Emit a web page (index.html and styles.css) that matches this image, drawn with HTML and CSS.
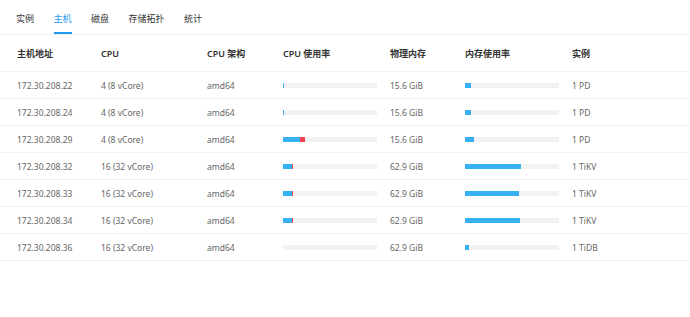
FILE: index.html
```html
<!DOCTYPE html>
<html lang="zh-CN">
<head>
    <meta charset="UTF-8">
    <meta name="viewport" content="width=device-width, initial-scale=1.0">
    <title>主机</title>
    <link rel="stylesheet" href="styles.css">
</head>
<body>
    <div class="tabs">
        <span class="tab">实例</span>
        <span class="tab active">主机</span>
        <span class="tab">磁盘</span>
        <span class="tab">存储拓扑</span>
        <span class="tab">统计</span>
    </div>

    <table class="hosts">
        <colgroup>
            <col style="width: 101px">
            <col style="width: 106px">
            <col style="width: 76px">
            <col style="width: 107px">
            <col style="width: 75px">
            <col style="width: 107px">
            <col>
        </colgroup>
        <thead>
            <tr>
                <th>主机地址</th>
                <th>CPU</th>
                <th>CPU 架构</th>
                <th>CPU 使用率</th>
                <th>物理内存</th>
                <th>内存使用率</th>
                <th>实例</th>
            </tr>
        </thead>
        <tbody>
            <tr>
                <td>172.30.208.22</td><td>4 (8 vCore)</td><td>amd64</td>
                <td><div class="bar"><i class="used" style="width: 1px"></i></div></td>
                <td>15.6 GiB</td>
                <td><div class="bar"><i class="used" style="width: 6px"></i></div></td>
                <td>1 PD</td>
            </tr>
            <tr>
                <td>172.30.208.24</td><td>4 (8 vCore)</td><td>amd64</td>
                <td><div class="bar"><i class="used" style="width: 1px"></i></div></td>
                <td>15.6 GiB</td>
                <td><div class="bar"><i class="used" style="width: 6px"></i></div></td>
                <td>1 PD</td>
            </tr>
            <tr>
                <td>172.30.208.29</td><td>4 (8 vCore)</td><td>amd64</td>
                <td><div class="bar"><i class="used" style="width: 17px"></i><i class="sys" style="width: 5px"></i></div></td>
                <td>15.6 GiB</td>
                <td><div class="bar"><i class="used" style="width: 9px"></i></div></td>
                <td>1 PD</td>
            </tr>
            <tr>
                <td>172.30.208.32</td><td>16 (32 vCore)</td><td>amd64</td>
                <td><div class="bar"><i class="used" style="width: 9px"></i><i class="sys" style="width: 1px"></i></div></td>
                <td>62.9 GiB</td>
                <td><div class="bar"><i class="used" style="width: 56px"></i></div></td>
                <td>1 TiKV</td>
            </tr>
            <tr>
                <td>172.30.208.33</td><td>16 (32 vCore)</td><td>amd64</td>
                <td><div class="bar"><i class="used" style="width: 9px"></i><i class="sys" style="width: 1px"></i></div></td>
                <td>62.9 GiB</td>
                <td><div class="bar"><i class="used" style="width: 54px"></i></div></td>
                <td>1 TiKV</td>
            </tr>
            <tr>
                <td>172.30.208.34</td><td>16 (32 vCore)</td><td>amd64</td>
                <td><div class="bar"><i class="used" style="width: 9px"></i><i class="sys" style="width: 1px"></i></div></td>
                <td>62.9 GiB</td>
                <td><div class="bar"><i class="used" style="width: 55px"></i></div></td>
                <td>1 TiKV</td>
            </tr>
            <tr>
                <td>172.30.208.36</td><td>16 (32 vCore)</td><td>amd64</td>
                <td><div class="bar"></div></td>
                <td>62.9 GiB</td>
                <td><div class="bar"><i class="used" style="width: 4px"></i></div></td>
                <td>1 TiDB</td>
            </tr>
        </tbody>
    </table>
</body>
</html>
```

FILE: styles.css
```css
body {
    margin: 0;
    background: #fff;
    font-family: "Noto Sans", "Noto Sans CJK SC", sans-serif;
    color: #333;
}
.tabs {
    display: flex;
    gap: 19.5px;
    height: 34px;
    padding-left: 16px;
    border-bottom: 1px solid #f0f0f0;
}
.tab {
    display: flex;
    align-items: center;
    height: 100%;
    box-sizing: border-box;
    padding-top: 4px;
    font-size: 9px;
    color: #333;
    border-bottom: 2px solid transparent;
}
.tab.active {
    color: #1a9af2;
    border-bottom-color: #1a9af2;
}
.hosts {
    width: 100%;
    border-collapse: collapse;
    table-layout: fixed;
}
.hosts th,
.hosts td {
    text-align: left;
    padding: 0;
    border-bottom: 1px solid #f0f0f0;
    white-space: nowrap;
}
.hosts th:first-child,
.hosts td:first-child {
    padding-left: 17px;
}
.hosts th {
    height: 36px;
    font-size: 9px;
    font-weight: 600;
    color: #333;
}
.hosts td {
    height: 26px;
    font-size: 8.5px;
    color: #666;
}
.bar {
    display: flex;
    width: 94px;
    height: 5px;
    background: #f2f2f2;
}
.bar i {
    display: block;
    height: 100%;
}
.bar .used {
    background: #35b1f4;
}
.bar .sys {
    background: #f2434d;
}
```
